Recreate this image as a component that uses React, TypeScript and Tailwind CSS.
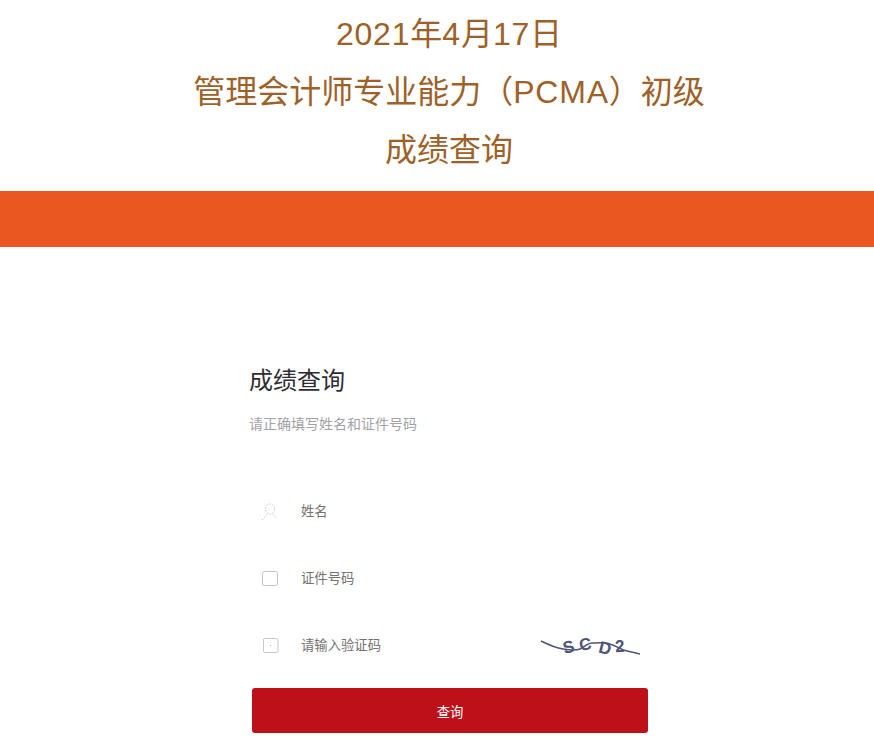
const font = "font-['Open_Sans','Noto_Sans_CJK_SC',sans-serif]"

function UserIcon() {
  return (
    <svg width="18" height="18" viewBox="0 0 18 18" fill="none" stroke="#c4c4c4" strokeWidth="1" strokeDasharray="1.500 1.500">
      <ellipse cx="9" cy="6" rx="4.500" ry="5" />
      <path d="M6 11.500L1 17M12 11.500L15.500 15" />
    </svg>
  )
}

function CardIcon() {
  return (
    <svg width="18" height="15" viewBox="0 0 18 15" fill="none" stroke="#c2c2c2">
      <rect x="1.500" y="0.500" width="15" height="14" rx="2" />
    </svg>
  )
}

function CodeIcon() {
  return (
    <svg width="18" height="15" viewBox="0 0 18 15" fill="none" stroke="#c8c8c8">
      <rect x="2.500" y="0.500" width="14.500" height="14" rx="1.500" />
      <path d="M9 7.500h1" stroke="#a8a8a8" />
    </svg>
  )
}

function Captcha() {
  return (
    <svg width="100" height="24" viewBox="0 0 100 24" className="block">
      <path d="M1 7C9 11 16 14 23 15c6 1 12 2 17 0 4-2 8-6 12-6 6 0 13-1 18 1 6 2 12 6 17 7 5 1 9 2 13 3" fill="none" stroke="#4d5478" strokeWidth="1.500" />
      <g fill="#4d5478" fontFamily="'Liberation Sans', sans-serif" fontSize="17" fontWeight="700">
        <text x="23" y="19" transform="rotate(-14 28 13)">S</text>
        <text x="39" y="16" transform="rotate(-10 45 10)">C</text>
        <text x="59" y="20" transform="rotate(14 65 14)">D</text>
        <text x="75" y="18" transform="rotate(-4 80 12)">2</text>
      </g>
    </svg>
  )
}

function Field({ icon, label, extra }: { icon: React.ReactNode; label: string; extra?: React.ReactNode }) {
  return (
    <div className="flex h-[67px] items-center">
      <div className="flex w-[51px] justify-start pl-[11px]">{icon}</div>
      <span className="text-[13.333px] text-[#75716f]">{label}</span>
      {extra && <div className="mr-2 ml-auto">{extra}</div>}
    </div>
  )
}

export default function App() {
  return (
    <div className={`${font} h-[742px] overflow-hidden bg-white`}>
      <h1 className="pl-6 pt-[5px] text-center font-['Liberation_Sans','Noto_Sans_CJK_SC',sans-serif] text-[32px] leading-[58px] font-normal text-[#9e6127]">
        <div>
          <span className="tracking-[0.8px]">2021</span>年<span className="tracking-[0.8px]">4</span>月<span className="tracking-[0.8px]">17</span>日
        </div>
        <div>
          管理会计师专业能力（<span className="tracking-[0.8px]">PCMA</span>）初级
        </div>
        <div>成绩查询</div>
      </h1>
      <div className="mt-[12px] h-[56px] bg-[#eb5721]" />
      <div className="ml-[249px] w-[399px] pt-[116px]">
        <h2 className="text-[24px] leading-[34px] font-normal text-[#2f2d33]">成绩查询</h2>
        <p className="mt-[17px] text-[14px] leading-[20px] text-[#a3a2a8]">请正确填写姓名和证件号码</p>
        <div className="mt-[44px] ml-px">
          <Field icon={<UserIcon />} label="姓名" />
          <Field icon={<CardIcon />} label="证件号码" />
          <Field icon={<CodeIcon />} label="请输入验证码" extra={<Captcha />} />
        </div>
        <button className="mt-[9px] ml-[3px] block h-[45px] w-[396px] rounded-[3px] bg-[#bd1019] pt-1 text-[13.333px] text-white">
          查询
        </button>
      </div>
    </div>
  )
}
